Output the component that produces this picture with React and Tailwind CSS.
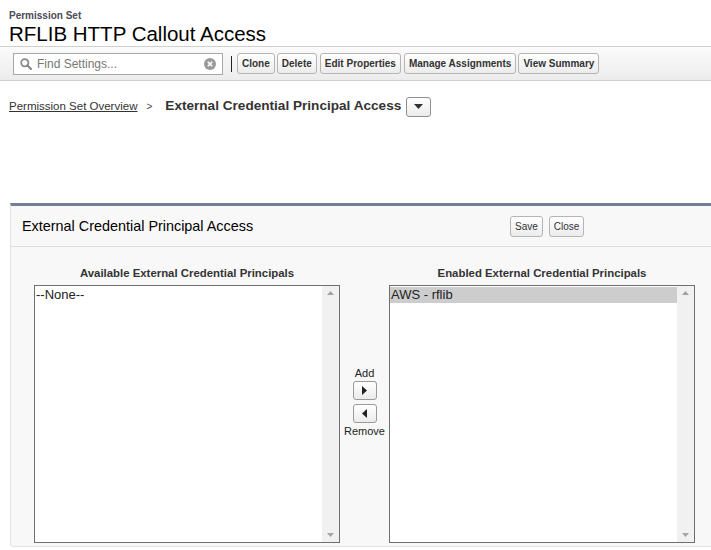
import React from "react";

const FONT = { fontFamily: '"Liberation Sans", Arial, sans-serif' };

const Btn = ({ children, className = "" }) => (
  <button
    className={`h-[21px] px-[4px] border border-[#b5b5b5] rounded-[3px] bg-gradient-to-b from-white to-[#ececec] text-[10px] font-bold text-[#333] leading-none ${className}`}
  >
    {children}
  </button>
);

const ListBox = ({ items, selected }) => (
  <div className="w-[306px] h-[258px] border border-[#6f6f6f] bg-white flex">
    <div className="flex-1 text-[13px] text-[#222] leading-[16px] pt-[1px]">
      {items.map((it) => (
        <div key={it} className={`pl-[1px] ${selected === it ? "bg-[#cdcdcd]" : ""}`}>
          {it}
        </div>
      ))}
    </div>
    <div className="w-[17px] bg-[#f1f1f1] flex flex-col justify-between items-center py-[5px]">
      <svg width="7" height="4" viewBox="0 0 7 4"><path d="M3.5 0L7 4H0z" fill="#a3a3a3" /></svg>
      <svg width="7" height="4" viewBox="0 0 7 4"><path d="M0 0h7L3.5 4z" fill="#a3a3a3" /></svg>
    </div>
  </div>
);

export default function App() {
  return (
    <div style={FONT} className="w-[711px] h-[550px] overflow-hidden bg-white text-black">
      {/* Header */}
      <div className="px-[9px] pt-[10px]">
        <div className="text-[10px] font-bold text-[#4a4a56] leading-[12px]">Permission Set</div>
        <h1 className="text-[20.5px] leading-[23px] text-[#000]">RFLIB HTTP Callout Access</h1>
      </div>

      {/* Toolbar */}
      <div className="mt-[1px] h-[35px] border-y border-[#cfcfcf] bg-gradient-to-b from-[#fbfbfb] to-[#ececec] flex items-center pl-[13px]">
        <div className="w-[210px] h-[22px] border border-[#a8a8a8] bg-white flex items-center px-[6px] gap-[5px]">
          <svg width="12" height="12" viewBox="0 0 12 12">
            <circle cx="4.8" cy="4.8" r="3.6" fill="none" stroke="#8a8a8a" strokeWidth="1.8" />
            <path d="M7.5 7.5L11 11" stroke="#8a8a8a" strokeWidth="2.2" strokeLinecap="round" />
          </svg>
          <span className="flex-1 text-[12px] text-[#777]">Find Settings...</span>
          <svg width="12" height="12" viewBox="0 0 12 12">
            <circle cx="6" cy="6" r="6" fill="#9a9a9a" />
            <path d="M3.8 3.8l4.4 4.4M8.2 3.8L3.8 8.2" stroke="#fff" strokeWidth="1.6" />
          </svg>
        </div>
        <div className="w-[1px] h-[16px] bg-[#222] ml-[8px] mr-[5px]" />
        <div className="flex gap-[2px]">
          <Btn>Clone</Btn>
          <Btn>Delete</Btn>
          <Btn className="ml-[1px]">Edit Properties</Btn>
          <Btn className="ml-[1px]">Manage Assignments</Btn>
          <Btn>View Summary</Btn>
        </div>
      </div>

      {/* Breadcrumb */}
      <div className="flex items-center h-[21px] mt-[15px] pl-[9px]">
        <a className="text-[11.5px] text-[#333] underline">Permission Set Overview</a>
        <span className="text-[10px] text-[#444] ml-[9px] mr-[13px]">&gt;</span>
        <span className="text-[13.6px] font-bold text-[#333]">External Credential Principal Access</span>
        <button className="ml-[5px] w-[25px] h-[20px] border border-[#8f8f8f] rounded-[3px] bg-gradient-to-b from-white to-[#ececec] flex items-center justify-center">
          <svg width="9" height="5" viewBox="0 0 9 5"><path d="M0 0h9L4.5 5z" fill="#333" /></svg>
        </button>
      </div>

      {/* Panel */}
      <div className="ml-[10px] mt-[86px] border-t-[3px] border-t-[#747e96] border-l border-b border-[#e2e2e2] rounded-bl-[4px] bg-[#f8f8f8] h-[344px]">
        <div className="h-[41px] border-b border-[#dddddd] flex items-center pl-[11px] pt-[1px]">
          <h2 className="w-[488px] text-[14.4px] text-[#000]">External Credential Principal Access</h2>
          <div className="flex gap-[6px]">
            <button className="h-[21px] px-[4px] border border-[#b5b5b5] rounded-[3px] bg-gradient-to-b from-white to-[#ececec] text-[10px] text-[#333]">Save</button>
            <button className="h-[21px] px-[4px] border border-[#b5b5b5] rounded-[3px] bg-gradient-to-b from-white to-[#ececec] text-[10px] text-[#333]">Close</button>
          </div>
        </div>

        <div className="flex pl-[23px] pt-[19px]">
          <div className="flex flex-col items-center">
            <div className="text-[11.4px] font-bold text-[#333] leading-[14px] mb-[5px]">Available External Credential Principals</div>
            <ListBox items={["--None--"]} />
          </div>
          <div className="w-[49px] flex flex-col items-center pt-[101px]">
            <div className="text-[11px] text-[#222] leading-[13px]">Add</div>
            <button className="mt-[1px] w-[24px] h-[19px] border border-[#9a9a9a] rounded-[3px] bg-gradient-to-b from-white to-[#ececec] flex items-center justify-center">
              <svg width="5" height="9" viewBox="0 0 5 9"><path d="M0 0l5 4.5L0 9z" fill="#222" /></svg>
            </button>
            <button className="mt-[4px] w-[24px] h-[19px] border border-[#9a9a9a] rounded-[3px] bg-gradient-to-b from-white to-[#ececec] flex items-center justify-center">
              <svg width="5" height="9" viewBox="0 0 5 9"><path d="M5 0L0 4.5 5 9z" fill="#222" /></svg>
            </button>
            <div className="text-[11px] text-[#222] leading-[13px] mt-[2px]">Remove</div>
          </div>
          <div className="flex flex-col items-center">
            <div className="text-[11.4px] font-bold text-[#333] leading-[14px] mb-[5px]">Enabled External Credential Principals</div>
            <ListBox items={["AWS - rflib"]} selected="AWS - rflib" />
          </div>
        </div>
      </div>
    </div>
  );
}
